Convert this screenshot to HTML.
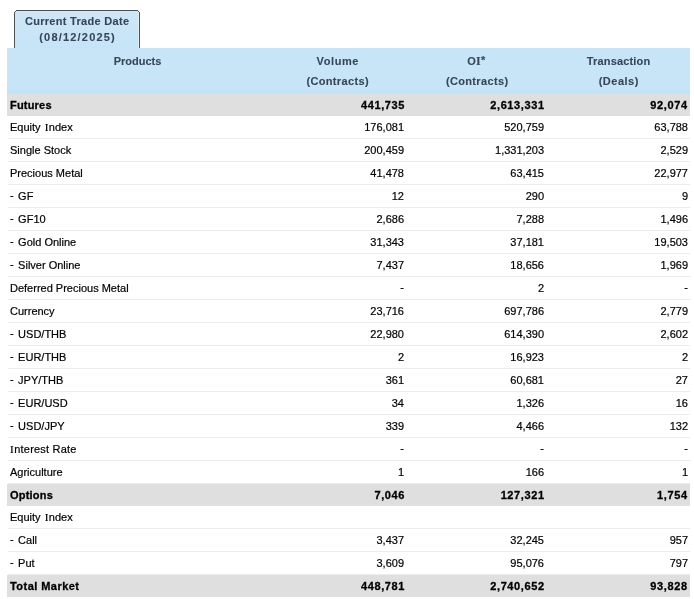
<!DOCTYPE html>
<html><head><meta charset="utf-8">
<style>
html,body{margin:0;padding:0;background:#fff;width:694px;height:599px;overflow:hidden;position:relative;font-family:"Liberation Sans",sans-serif;font-size:11px;color:#000;}
.layer{position:absolute;left:0;top:0;width:694px;height:599px;}
.tl{will-change:transform;-webkit-text-stroke:0.2px currentColor;}
.tab{position:absolute;left:15px;top:11px;width:124px;height:37px;background:linear-gradient(#cfe6f6,#c6e4f8);box-shadow:inset -1px 0 #e0f0f2;clip-path:polygon(1px 0,100% 0,100% 100%,0 100%,0 1px);}
.l{-webkit-text-stroke:0.1px currentColor;position:absolute;left:15px;width:124px;text-align:center;font-weight:bold;color:#364657;white-space:nowrap;line-height:12px;}
.hdr{position:absolute;left:7px;top:48px;width:683px;height:46px;background:linear-gradient(#c8e5f8 0,#c8e5f8 42px,#c2e4fb 42px);}
.h{-webkit-text-stroke:0.1px currentColor;position:absolute;text-align:center;font-weight:bold;color:#364657;white-space:nowrap;line-height:12px;}
.bg{position:absolute;left:7px;width:683px;height:22px;background:#dfdfdf;}
.bw{position:absolute;left:8px;width:682px;height:22px;border-bottom:1px solid #ececec;}
.r{position:absolute;left:7px;width:683px;height:22px;}
.g{font-weight:bold;}
.r span{position:absolute;top:0;line-height:22px;white-space:nowrap;}
.c0{left:3px;}
.d{font-style:normal;margin-right:1.4px;position:relative;top:-1px;}
.dv{font-style:normal;position:relative;top:-1px;}
.si{font-style:normal;font-family:"Liberation Serif",serif;font-size:11px;}
.g{-webkit-text-stroke:0.3px #000;}
.g .c0{letter-spacing:0.2px;}
.g .c1{right:285px;}
.g .c2{right:145.4px;}
.g .c3{right:2.4px;}
.w .c1{right:286px;}
.w .c2{right:146px;}
.w .c3{right:2px;}
.g .c1,.g .c2,.g .c3{letter-spacing:0.6px;}
</style></head><body>
<div class="layer">
<div class="tab"></div>
<div style="position:absolute;left:16px;top:10px;width:122px;height:1px;background:#4c5256"></div>
<div style="position:absolute;left:14px;top:12px;width:1px;height:36px;background:#4c5256"></div>
<div style="position:absolute;left:139px;top:12px;width:1px;height:36px;background:#4c5256"></div>
<div style="position:absolute;left:15px;top:11px;width:1px;height:1px;background:#4c5256"></div>
<div style="position:absolute;left:138px;top:11px;width:1px;height:1px;background:#4c5256"></div>
<div class="hdr"></div>
<div class="bg" style="top:94px"></div>
<div class="bw" style="top:116px"></div>
<div class="bw" style="top:139px"></div>
<div class="bw" style="top:162px"></div>
<div class="bw" style="top:185px"></div>
<div class="bw" style="top:208px"></div>
<div class="bw" style="top:231px"></div>
<div class="bw" style="top:254px"></div>
<div class="bw" style="top:277px"></div>
<div class="bw" style="top:300px"></div>
<div class="bw" style="top:323px"></div>
<div class="bw" style="top:346px"></div>
<div class="bw" style="top:369px"></div>
<div class="bw" style="top:392px"></div>
<div class="bw" style="top:415px"></div>
<div class="bw" style="top:438px"></div>
<div class="bw" style="top:461px"></div>
<div class="bg" style="top:484px"></div>
<div class="bw" style="top:506px"></div>
<div class="bw" style="top:529px"></div>
<div class="bw" style="top:552px"></div>
<div class="bg" style="top:575px"></div>
</div>
<div class="layer tl">
<div class="l" style="top:15px;letter-spacing:0.3px;text-indent:0.3px">Current Trade Date</div>
<div class="l" style="top:31px;letter-spacing:1.2px;text-indent:1.2px">(08/12/2025)</div>
<div class="h" style="left:7px;width:261px;top:55px;letter-spacing:0px;text-indent:0px">Products</div>
<div class="h" style="left:268px;width:139px;top:55px;letter-spacing:0.6px;text-indent:0.6px">Volume</div>
<div class="h" style="left:268px;width:139px;top:75px;letter-spacing:0.35px;text-indent:0.35px">(Contracts)</div>
<div class="h" style="left:407px;width:140px;top:55px;letter-spacing:0.2px;text-indent:-1.4px">O<span style="font-family:'Liberation Serif',serif;font-size:12px;letter-spacing:0.4px">I</span><span style="position:relative;top:-1px">*</span></div>
<div class="h" style="left:407px;width:140px;top:75px;letter-spacing:0.35px;text-indent:0.35px">(Contracts)</div>
<div class="h" style="left:547px;width:143px;top:55px;letter-spacing:0.15px;text-indent:0.15px">Transaction</div>
<div class="h" style="left:547px;width:143px;top:75px;letter-spacing:0.5px;text-indent:0.5px">(Deals)</div>
<div class="r g" style="top:94px"><span class="c0">Futures</span><span class="c1">441,735</span><span class="c2">2,613,331</span><span class="c3">92,074</span></div>
<div class="r w" style="top:116px"><span class="c0">Equity <i class="si" style="margin-left:1px;margin-right:0.5px">I</i>ndex</span><span class="c1">176,081</span><span class="c2">520,759</span><span class="c3">63,788</span></div>
<div class="r w" style="top:139px"><span class="c0">Single Stock</span><span class="c1">200,459</span><span class="c2">1,331,203</span><span class="c3">2,529</span></div>
<div class="r w" style="top:162px"><span class="c0">Precious Metal</span><span class="c1">41,478</span><span class="c2">63,415</span><span class="c3">22,977</span></div>
<div class="r w" style="top:185px"><span class="c0"><i class="d">-</i> GF</span><span class="c1">12</span><span class="c2">290</span><span class="c3">9</span></div>
<div class="r w" style="top:208px"><span class="c0"><i class="d">-</i> GF10</span><span class="c1">2,686</span><span class="c2">7,288</span><span class="c3">1,496</span></div>
<div class="r w" style="top:231px"><span class="c0"><i class="d">-</i> Gold Online</span><span class="c1">31,343</span><span class="c2">37,181</span><span class="c3">19,503</span></div>
<div class="r w" style="top:254px"><span class="c0"><i class="d">-</i> Silver Online</span><span class="c1">7,437</span><span class="c2">18,656</span><span class="c3">1,969</span></div>
<div class="r w" style="top:277px"><span class="c0">Deferred Precious Metal</span><span class="c1"><i class="dv">-</i></span><span class="c2">2</span><span class="c3"><i class="dv">-</i></span></div>
<div class="r w" style="top:300px"><span class="c0">Currency</span><span class="c1">23,716</span><span class="c2">697,786</span><span class="c3">2,779</span></div>
<div class="r w" style="top:323px"><span class="c0"><i class="d">-</i> USD/THB</span><span class="c1">22,980</span><span class="c2">614,390</span><span class="c3">2,602</span></div>
<div class="r w" style="top:346px"><span class="c0"><i class="d">-</i> EUR/THB</span><span class="c1">2</span><span class="c2">16,923</span><span class="c3">2</span></div>
<div class="r w" style="top:369px"><span class="c0"><i class="d">-</i> JPY/THB</span><span class="c1">361</span><span class="c2">60,681</span><span class="c3">27</span></div>
<div class="r w" style="top:392px"><span class="c0"><i class="d">-</i> EUR/USD</span><span class="c1">34</span><span class="c2">1,326</span><span class="c3">16</span></div>
<div class="r w" style="top:415px"><span class="c0"><i class="d">-</i> USD/JPY</span><span class="c1">339</span><span class="c2">4,466</span><span class="c3">132</span></div>
<div class="r w" style="top:438px"><span class="c0"><i class="si" style="margin-right:0.6px">I</i><i style="font-style:normal;letter-spacing:0.2px">nterest Rate</i></span><span class="c1"><i class="dv">-</i></span><span class="c2"><i class="dv">-</i></span><span class="c3"><i class="dv">-</i></span></div>
<div class="r w" style="top:461px"><span class="c0">Agriculture</span><span class="c1">1</span><span class="c2">166</span><span class="c3">1</span></div>
<div class="r g" style="top:484px"><span class="c0">Options</span><span class="c1">7,046</span><span class="c2">127,321</span><span class="c3">1,754</span></div>
<div class="r w" style="top:506px"><span class="c0">Equity <i class="si" style="margin-left:1px;margin-right:0.5px">I</i>ndex</span><span class="c1"></span><span class="c2"></span><span class="c3"></span></div>
<div class="r w" style="top:529px"><span class="c0"><i class="d">-</i> Call</span><span class="c1">3,437</span><span class="c2">32,245</span><span class="c3">957</span></div>
<div class="r w" style="top:552px"><span class="c0"><i class="d">-</i> Put</span><span class="c1">3,609</span><span class="c2">95,076</span><span class="c3">797</span></div>
<div class="r g" style="top:575px"><span class="c0"><i style="font-style:normal;letter-spacing:0.45px">Total Market</i></span><span class="c1">448,781</span><span class="c2">2,740,652</span><span class="c3">93,828</span></div>
</div>
</body></html>
